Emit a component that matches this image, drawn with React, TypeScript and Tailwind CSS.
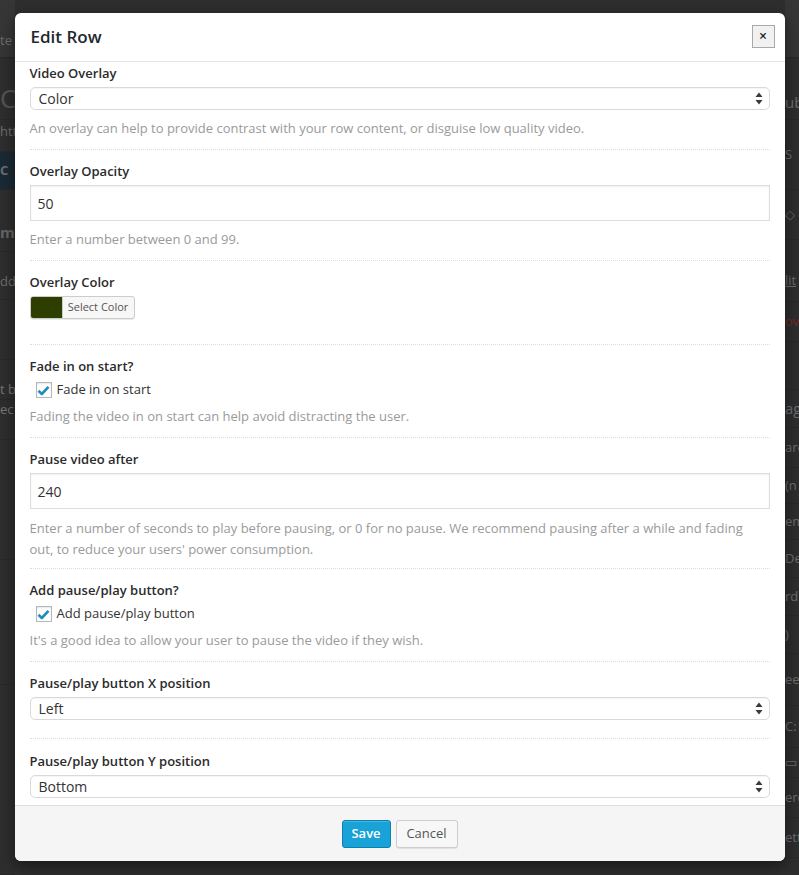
import React from "react";

function SelectArrows() {
  return (
    <svg width="8" height="13" viewBox="0 0 8 13" aria-hidden>
      <path d="M4 0.5 L7.5 5 H0.5Z" fill="#3a3a3a" />
      <path d="M0.5 8 H7.5 L4 12.5Z" fill="#3a3a3a" />
    </svg>
  );
}

function SelectBox({ value }: { value: string }) {
  return (
    <div className="mt-1 flex h-[23px] items-center justify-between rounded-[5px] border border-[#d9d9d9] bg-white pl-[8px] pr-[6px] text-[14px] text-[#333] shadow-[inset_0_1px_1px_rgba(0,0,0,0.04)]">
      <span>{value}</span>
      <SelectArrows />
    </div>
  );
}

function TextBox({ value }: { value: string }) {
  return (
    <div className="mt-1 flex h-[36px] items-center border border-[#dddddd] bg-white pl-[7px] text-[14px] text-[#333] shadow-[inset_0_1px_2px_rgba(0,0,0,0.07)]">
      {value}
    </div>
  );
}

function Check({ label }: { label: string }) {
  return (
    <div className="mt-[4px] flex h-[20px] items-center pl-[6px] text-[13px] text-[#333]">
      <span className="flex h-[16px] w-[16px] items-center justify-center border border-[#b4b9be] bg-white shadow-[inset_0_1px_2px_rgba(0,0,0,0.1)]">
        <svg width="13" height="11" viewBox="0 0 13 11" aria-hidden>
          <path d="M1.5 5.8 L4.8 9 L11.5 1.8" stroke="#1e8cbe" strokeWidth="2.6" fill="none" strokeLinejoin="round" />
        </svg>
      </span>
      <span className="ml-[5px]">{label}</span>
    </div>
  );
}

function Desc({ children, mt = "mt-2" }: { children: React.ReactNode; mt?: string }) {
  return <p className={`${mt} text-[13px] leading-[21px] text-[#9a9a9a]`}>{children}</p>;
}

function Label({ children }: { children: React.ReactNode }) {
  return <div className="text-[13px] font-semibold leading-[20px] text-[#2b2b2b]">{children}</div>;
}

function Sep() {
  return <div className="border-t border-dotted border-[#dcdcdc]" />;
}

function Strip({ rows, align }: { rows: { h: number; text?: string; cls?: string; bg?: string }[]; align: "left" | "right" }) {
  return (
    <div className={`flex flex-col overflow-hidden ${align === "left" ? "w-[15px]" : "w-[14px]"}`}>
      {rows.map((r, i) => (
        <div
          key={i}
          style={{ height: r.h, background: r.bg }}
          className={`flex items-center overflow-hidden whitespace-nowrap border-b border-[#292929] text-[13px] text-[#6e6e6e] ${r.cls ?? ""}`}
        >
          {r.text}
        </div>
      ))}
    </div>
  );
}

export default function App() {
  const leftRows = [
    { h: 58, text: "te", cls: "pt-[24px]", bg: "#363636" },
    { h: 62, text: "C I", cls: "text-[26px] text-[#555] pt-[20px]" },
    { h: 32, text: "htt", cls: "text-[12px] pb-[8px]" },
    { h: 38, text: "C M", cls: "text-[12px] font-bold tracking-[2px] text-[#5f7d8f]", bg: "#1a2a35" },
    { h: 62, text: "mp", cls: "pt-[24px] font-bold text-[15px] text-[#666]" },
    { h: 48, text: "dd", cls: "pt-[12px]" },
    { h: 60, text: "" },
    { h: 40, text: "t bl", cls: "pt-[20px] text-[#777]" },
    { h: 40, text: "ec", cls: "items-start text-[#777]" },
    { h: 120, text: "" },
    { h: 125, text: "" },
    { h: 190, text: "" },
  ];
  const rightRows = [
    { h: 58, text: "", bg: "#363636" },
    { h: 62, text: "ub", cls: "pt-[28px] text-[15px] text-[#6a6a6a]" },
    { h: 70, text: "S", cls: "text-[12px]" },
    { h: 50, text: "◇ ○", cls: "text-[12px]" },
    { h: 62, text: "lit", cls: "pt-[20px] text-[#3d6c8a] underline" },
    { h: 40, text: "ov", cls: "text-[#7a2a2a]" },
    { h: 48, text: "" },
    { h: 38, text: "ag", cls: "text-[15px]" },
    { h: 40, text: "are" },
    { h: 36, text: "(n" },
    { h: 36, text: "em" },
    { h: 38, text: "De" },
    { h: 38, text: "rd" },
    { h: 38, text: ")" },
    { h: 52, text: "ee gh", cls: "text-[12px]" },
    { h: 42, text: "C:" },
    { h: 30, text: "▭" },
    { h: 40, text: "ere esi", cls: "text-[12px]" },
    { h: 40, text: "etti", cls: "text-[12px]" },
  ];

  return (
    <div className="relative h-[875px] w-[799px] overflow-hidden bg-[#2e2e2e] font-['Open_Sans','Noto_Sans',sans-serif]">
      {/* dimmed page behind */}
      <div className="flex h-full w-full justify-between">
        <Strip rows={leftRows} align="left" />
        <div className="flex-1" />
        <Strip rows={rightRows} align="right" />
      </div>

      {/* modal */}
      <div className="absolute inset-0 flex items-start justify-center pt-[13px]">
        <div className="flex h-[848px] w-[770px] flex-col overflow-hidden rounded-[6px] bg-white shadow-[0_5px_15px_rgba(0,0,0,0.5)]">
          <div className="flex h-[49px] shrink-0 items-center justify-between border-b border-[#e5e5e5] pl-[16px] pr-[10px]">
            <h1 className="text-[17px] font-semibold text-[#23282d]">Edit Row</h1>
            <button className="mb-[2px] flex h-[23px] w-[23px] items-center justify-center border border-[#a9a9a9] bg-[#f1f1f1] text-[14px] font-semibold leading-none text-[#222]">
              ×
            </button>
          </div>

          <div className="flex-1 overflow-hidden px-[15px]">
            <div className="pb-[10px] pt-[1px]">
              <Label>Video Overlay</Label>
              <SelectBox value="Color" />
              <Desc>An overlay can help to provide contrast with your row content, or disguise low quality video.</Desc>
            </div>
            <Sep />
            <div className="pb-[10px] pt-[11px]">
              <Label>Overlay Opacity</Label>
              <TextBox value="50" />
              <Desc>Enter a number between 0 and 99.</Desc>
            </div>
            <Sep />
            <div className="pb-[25px] pt-[11px]">
              <Label>Overlay Color</Label>
              <div className="mt-1 flex h-[23px] w-[105px] overflow-hidden rounded-[3px] border border-[#cccccc] bg-[#f7f7f7] shadow-[0_1px_0_rgba(0,0,0,0.08)]">
                <span className="w-[31px] bg-[#2e3d00]" />
                <span className="flex flex-1 items-center justify-center border-l border-[#cccccc] text-[11px] text-[#555]">
                  Select Color
                </span>
              </div>
            </div>
            <Sep />
            <div className="pb-[10px] pt-[11px]">
              <Label>Fade in on start?</Label>
              <Check label="Fade in on start" />
              <Desc mt="mt-[6px]">Fading the video in on start can help avoid distracting the user.</Desc>
            </div>
            <Sep />
            <div className="pb-[8px] pt-[11px]">
              <Label>Pause video after</Label>
              <TextBox value="240" />
              <Desc mt="mt-[9px]">
                Enter a number of seconds to play before pausing, or 0 for no pause. We recommend pausing after a while and fading out, to reduce your users' power consumption.
              </Desc>
            </div>
            <Sep />
            <div className="pb-[10px] pt-[11px]">
              <Label>Add pause/play button?</Label>
              <Check label="Add pause/play button" />
              <Desc mt="mt-[6px]">It's a good idea to allow your user to pause the video if they wish.</Desc>
            </div>
            <Sep />
            <div className="pb-[18px] pt-[11px]">
              <Label>Pause/play button X position</Label>
              <SelectBox value="Left" />
            </div>
            <Sep />
            <div className="pb-[18px] pt-[12px]">
              <Label>Pause/play button Y position</Label>
              <SelectBox value="Bottom" />
            </div>
          </div>

          <div className="flex h-[56px] shrink-0 items-center justify-center gap-[5px] border-t border-[#dddddd] bg-[#f5f5f5]">
            <button className="h-[28px] w-[49px] rounded-[3px] border border-[#0a7fb0] bg-[#18a2d8] text-[13px] font-semibold text-white shadow-[inset_0_1px_0_rgba(120,200,230,0.5)]">
              Save
            </button>
            <button className="h-[28px] w-[62px] rounded-[3px] border border-[#cccccc] bg-[#f7f7f7] text-[13px] text-[#555] shadow-[0_1px_0_rgba(0,0,0,0.08)]">
              Cancel
            </button>
          </div>
        </div>
      </div>
    </div>
  );
}
